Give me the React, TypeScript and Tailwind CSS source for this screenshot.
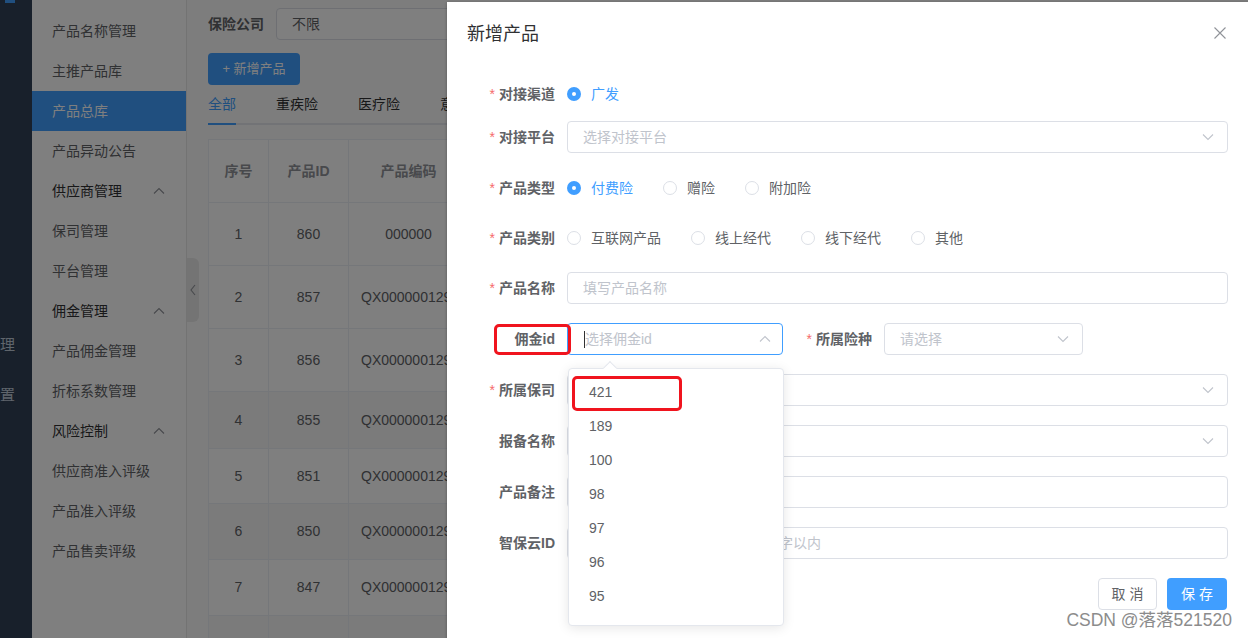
import React from 'react';

const font = "font-['Liberation_Sans','Noto_Sans_CJK_SC',sans-serif]";

const Chevron = ({ up = false, color = '#c0c4cc' }: { up?: boolean; color?: string }) => (
    <svg width="14" height="14" viewBox="0 0 14 14" className="shrink-0">
        <path d={up ? 'M2 9.5 L7 4.5 L12 9.5' : 'M2 4.5 L7 9.5 L12 4.5'} stroke={color} strokeWidth="1.1" fill="none" />
    </svg>
);

const Radio = ({ label, checked = false }: { label: string; checked?: boolean }) => (
    <div className="flex items-center mr-[30px]">
        {checked ? (
            <span className="w-[14px] h-[14px] rounded-full bg-[#409eff] flex items-center justify-center">
                <span className="w-[4px] h-[4px] rounded-full bg-white" />
            </span>
        ) : (
            <span className="w-[14px] h-[14px] rounded-full border border-[#dcdfe6] bg-white" />
        )}
        <span className={checked ? 'pl-[10px] text-[14px] text-[#409eff]' : 'pl-[10px] text-[14px] text-[#606266]'}>{label}</span>
    </div>
);

const Label = ({ text, required = false, width = 'w-[100px]' }: { text: string; required?: boolean; width?: string }) => (
    <div className={width + ' shrink-0 pr-[12px] flex justify-end items-center text-[14px] font-bold text-[#606266]'}>
        {required && <span className="text-[#f56c6c] mr-[4px] font-normal">*</span>}
        {text}
    </div>
);

const Field = ({ placeholder = '', select = false }: { placeholder?: string; select?: boolean }) => (
    <div className="flex-1 h-[32px] border border-[#dcdfe6] rounded-[4px] flex items-center pl-[15px] pr-[12px] text-[14px] text-[#c0c4cc] bg-white">
        <span className="flex-1 whitespace-nowrap overflow-hidden">{placeholder}</span>
        {select && <Chevron />}
    </div>
);

const menu: { text: string; group?: boolean; active?: boolean }[] = [
    { text: '产品名称管理' },
    { text: '主推产品库' },
    { text: '产品总库', active: true },
    { text: '产品异动公告' },
    { text: '供应商管理', group: true },
    { text: '保司管理' },
    { text: '平台管理' },
    { text: '佣金管理', group: true },
    { text: '产品佣金管理' },
    { text: '折标系数管理' },
    { text: '风险控制', group: true },
    { text: '供应商准入评级' },
    { text: '产品准入评级' },
    { text: '产品售卖评级' },
];

const rows = [
    { n: 1, id: 860, code: '000000', h: 'h-[63px]', bg: 'bg-white' },
    { n: 2, id: 857, code: 'QX000000129510', h: 'h-[63px]', bg: 'bg-white' },
    { n: 3, id: 856, code: 'QX000000129511', h: 'h-[63px]', bg: 'bg-white' },
    { n: 4, id: 855, code: 'QX000000129512', h: 'h-[57px]', bg: 'bg-[#f7f7f7]' },
    { n: 5, id: 851, code: 'QX000000129513', h: 'h-[55px]', bg: 'bg-white' },
    { n: 6, id: 850, code: 'QX000000129514', h: 'h-[56px]', bg: 'bg-[#f7f7f7]' },
    { n: 7, id: 847, code: 'QX000000129515', h: 'h-[56px]', bg: 'bg-white' },
    { n: 8, id: 846, code: 'QX000000129516', h: 'h-[56px]', bg: 'bg-[#f7f7f7]' },
];

const options = ['421', '189', '100', '98', '97', '96', '95', '94'];

export default function App() {
    return (
        <div className={'relative w-[1248px] h-[638px] overflow-hidden flex bg-[#fbfbfb] ' + font}>
            {/* left dark nav, mostly collapsed */}
            <div className="w-[32px] shrink-0 bg-[#304156] overflow-hidden flex flex-col">
                <div className="ml-[5px] w-[10px] h-[3px] bg-[#409eff]" />
                <div className="mt-[317px] h-[50px] flex items-center justify-end pr-[17px] whitespace-nowrap text-[15px] text-[#bfcbd9]">佣金管理</div>
                <div className="h-[50px] flex items-center justify-end pr-[17px] whitespace-nowrap text-[15px] text-[#bfcbd9]">系统设置</div>
            </div>

            {/* sub menu */}
            <div className="w-[155px] shrink-0 bg-white border-r border-[#e6e6e6] pt-[11px]">
                {menu.map((m) => (
                    <div
                        key={m.text}
                        className={
                            m.active
                                ? 'h-[40px] flex items-center pl-[20px] text-[14px] bg-[#409eff] text-white'
                                : m.group
                                ? 'h-[40px] flex items-center justify-between pl-[20px] pr-[20px] text-[14px] text-[#303133]'
                                : 'h-[40px] flex items-center pl-[20px] text-[14px] text-[#606266]'
                        }
                    >
                        <span>{m.text}</span>
                        {m.group && <Chevron up color="#909399" />}
                    </div>
                ))}
            </div>

            {/* collapse handle */}
            <div className="w-[13px] shrink-0">
                <div className="mt-[258px] h-[64px] w-[12px] bg-[#e8e8e8] rounded-r-[6px] flex items-center justify-center">
                    <svg width="8" height="14" viewBox="0 0 8 14">
                        <path d="M6 2 L2 7 L6 12" stroke="#909399" strokeWidth="1.1" fill="none" />
                    </svg>
                </div>
            </div>

            {/* main content */}
            <div className="flex-1 pl-[8px] pt-[8px] min-w-0">
                <div className="flex items-center h-[32px]">
                    <span className="w-[68px] text-[14px] font-bold text-[#606266]">保险公司</span>
                    <div className="w-[240px] h-[32px] border border-[#dcdfe6] rounded-[4px] bg-white flex items-center pl-[15px] text-[14px] text-[#606266]">不限</div>
                </div>
                <div className="mt-[13px] w-[92px] h-[32px] rounded-[4px] bg-[#409eff] text-white text-[13px] flex items-center justify-center">+ 新增产品</div>
                <div className="h-[40px] flex items-stretch border-b-2 border-[#e4e7ed] w-[600px]">
                    <div className="relative flex items-center pr-[20px] text-[14px] text-[#409eff]">
                        全部
                        <span className="absolute left-0 right-[20px] bottom-[-2px] h-[2px] bg-[#409eff]" />
                    </div>
                    <div className="flex items-center px-[20px] text-[14px] text-[#303133]">重疾险</div>
                    <div className="flex items-center px-[20px] text-[14px] text-[#303133]">医疗险</div>
                    <div className="flex items-center px-[20px] text-[14px] text-[#303133]">意外险</div>
                </div>
                <div className="mt-[14px] w-[800px] border-l border-t border-[#ebeef5]">
                    <div className="flex h-[63px] text-[14px] font-bold text-[#909399] bg-white">
                        <div className="w-[60px] border-r border-b border-[#ebeef5] flex items-center justify-center">序号</div>
                        <div className="w-[80px] border-r border-b border-[#ebeef5] flex items-center justify-center">产品ID</div>
                        <div className="w-[120px] border-r border-b border-[#ebeef5] flex items-center justify-center">产品编码</div>
                        <div className="flex-1 border-r border-b border-[#ebeef5] flex items-center justify-center">产品名称</div>
                    </div>
                    {rows.map((r) => (
                        <div key={r.n} className={'flex text-[14px] text-[#606266] ' + r.h + ' ' + r.bg}>
                            <div className="w-[60px] border-r border-b border-[#ebeef5] flex items-center justify-center">{r.n}</div>
                            <div className="w-[80px] border-r border-b border-[#ebeef5] flex items-center justify-center">{r.id}</div>
                            <div className="w-[120px] border-r border-b border-[#ebeef5] flex items-center px-[12px] overflow-hidden">
                                <span className="w-full text-center whitespace-nowrap">{r.code}</span>
                            </div>
                            <div className="flex-1 border-r border-b border-[#ebeef5]" />
                        </div>
                    ))}
                </div>
            </div>

            {/* modal overlay */}
            <div className="absolute inset-0 bg-black/50" />

            {/* dialog */}
            <div className="absolute left-[447px] top-[2px] w-[801px] h-[680px] bg-white shadow-[0_1px_3px_rgba(0,0,0,0.3)] px-[20px]">
                <div className="h-[64px] pt-[20px] flex justify-between">
                    <span className="text-[18px] leading-[24px] text-[#303133]">新增产品</span>
                    <svg width="14" height="14" viewBox="0 0 14 14" className="mt-[4px] mr-[1px]">
                        <path d="M1.5 1.5 L12.5 12.5 M12.5 1.5 L1.5 12.5" stroke="#909399" strokeWidth="1.1" />
                    </svg>
                </div>

                <div className="pt-[12px]">
                    <div className="flex items-center h-[32px] mb-[11px]">
                        <Label text="对接渠道" required />
                        <Radio label="广发" checked />
                    </div>
                    <div className="flex items-center h-[32px] mb-[19px]">
                        <Label text="对接平台" required />
                        <Field placeholder="选择对接平台" select />
                    </div>
                    <div className="flex items-center h-[32px] mb-[18px]">
                        <Label text="产品类型" required />
                        <Radio label="付费险" checked />
                        <Radio label="赠险" />
                        <Radio label="附加险" />
                    </div>
                    <div className="flex items-center h-[32px] mb-[18px]">
                        <Label text="产品类别" required />
                        <Radio label="互联网产品" />
                        <Radio label="线上经代" />
                        <Radio label="线下经代" />
                        <Radio label="其他" />
                    </div>
                    <div className="flex items-center h-[32px] mb-[19px]">
                        <Label text="产品名称" required />
                        <Field placeholder="填写产品名称" />
                    </div>
                    <div className="relative z-10 flex items-center h-[32px] mb-[19px]">
                        <Label text="佣金id" />
                        <div className="relative w-[216px] h-[32px] border border-[#409eff] rounded-[4px] flex items-center pl-[16px] pr-[10px] text-[14px] text-[#c0c4cc] bg-white">
                            <span className="w-[1px] h-[17px] bg-[#303133]" />
                            <span className="flex-1">选择佣金id</span>
                            <Chevron up />
                            {/* dropdown */}
                            <div className="absolute left-[0px] top-[44px] w-[216px] h-[258px] bg-white border border-[#e4e7ed] rounded-[4px] shadow-[0_2px_12px_rgba(0,0,0,0.1)]">
                                <div className="absolute left-[36px] top-[-6px] w-[10px] h-[10px] bg-white border-l border-t border-[#e4e7ed] rotate-45" />
                                <div className="h-full overflow-hidden pt-[6px]">
                                    {options.map((o) => (
                                        <div key={o} className="h-[34px] flex items-center pl-[20px] text-[14px] text-[#606266]">{o}</div>
                                    ))}
                                </div>
                                <div className="absolute left-[3px] top-[7px] w-[110px] h-[35px] border-[3px] border-[#f0141e] rounded-[5px]" />
                            </div>
                        </div>
                        <Label text="所属险种" required width="w-[101px]" />
                        <div className="w-[199px] h-[32px] border border-[#dcdfe6] rounded-[4px] flex items-center pl-[15px] pr-[12px] text-[14px] text-[#c0c4cc]">
                            <span className="flex-1">请选择</span>
                            <Chevron />
                        </div>
                        {/* annotation box round the label */}
                        <div className="absolute left-[27px] top-[1px] w-[77px] h-[31px] border-[3px] border-[#f0141e] rounded-[5px]" />
                    </div>
                    <div className="flex items-center h-[32px] mb-[19px]">
                        <Label text="所属保司" required />
                        <Field select />
                    </div>
                    <div className="flex items-center h-[32px] mb-[19px]">
                        <Label text="报备名称" />
                        <Field select />
                    </div>
                    <div className="flex items-center h-[32px] mb-[19px]">
                        <Label text="产品备注" />
                        <Field />
                    </div>
                    <div className="flex items-center h-[32px] mb-[19px]">
                        <Label text="智保云ID" />
                        <Field placeholder="请输入智保云ID，长度在五十个字以内" />
                    </div>
                    <div className="flex justify-end gap-[10px] pr-[1px]">
                        <div className="w-[59px] h-[32px] border border-[#dcdfe6] rounded-[4px] flex items-center justify-center text-[14px] tracking-[4px] pl-[4px] text-[#606266]">取消</div>
                        <div className="w-[60px] h-[32px] rounded-[4px] bg-[#409eff] flex items-center justify-center text-[14px] tracking-[4px] pl-[4px] text-white">保存</div>
                    </div>
                </div>
            </div>

            {/* watermark */}
            <div className="absolute right-[16px] bottom-[6px] text-[17.5px] leading-[24px] text-[#8c8c8c] [text-shadow:0_0_2px_#fff,0_0_1px_#fff]">
                CSDN @落落521520
            </div>
        </div>
    );
}
